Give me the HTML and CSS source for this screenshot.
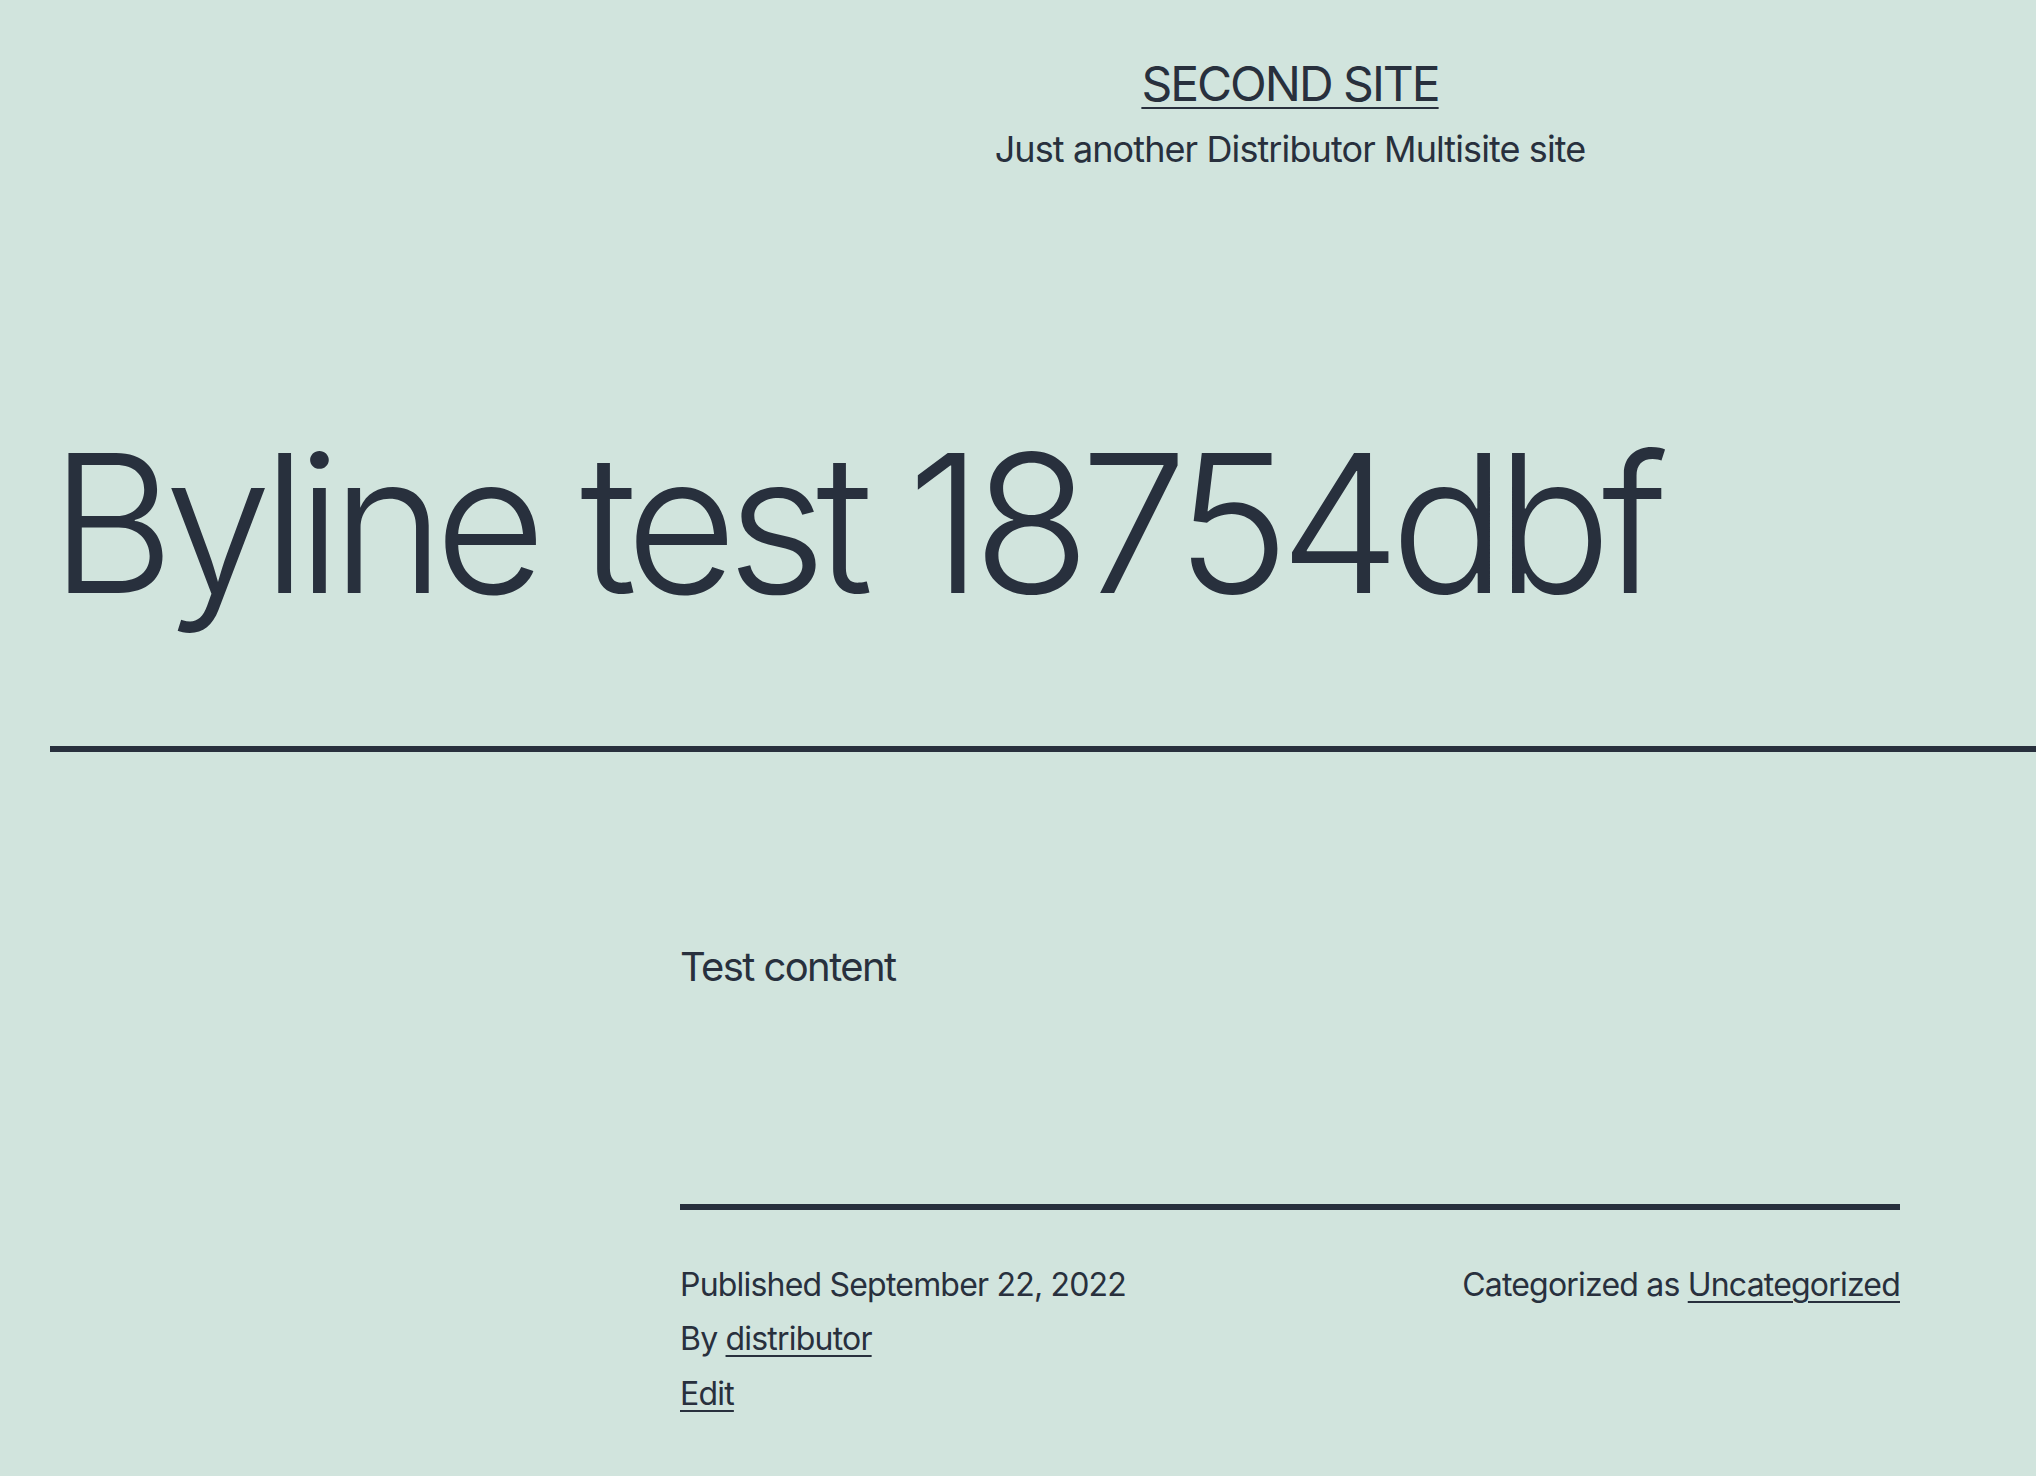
FILE: index.html
```html
<!DOCTYPE html>
<html lang="en">
<head>
<meta charset="utf-8">
<title>Byline test 18754dbf – SECOND SITE</title>
<link rel="stylesheet" href="styles.css">
</head>
<body>
<div class="page">
  <header class="site-header">
    <p class="site-title"><a href="#">SECOND SITE</a></p>
    <p class="site-description">Just another Distributor Multisite site</p>
  </header>
  <main class="site-main">
    <article class="post">
      <header class="entry-header">
        <h1 class="entry-title">Byline test 18754dbf</h1>
      </header>
      <div class="entry-content">
        <p>Test content</p>
      </div>
      <footer class="entry-footer">
        <div class="posted-by">
          <span class="posted-on">Published <time>September 22, 2022</time></span>
          <span class="byline">By <a href="#">distributor</a></span>
          <span class="edit-link"><a href="#">Edit</a></span>
        </div>
        <div class="cat-links">Categorized as <a href="#">Uncategorized</a></div>
      </footer>
    </article>
  </main>
</div>
</body>
</html>
```

FILE: styles.css
```css
html, body {
  margin: 0;
  padding: 0;
  overflow-x: hidden;
}

body {
  background: #d1e4dd;
  color: #28303d;
  font-family: Inter, "Liberation Sans", sans-serif;
}

a {
  color: #28303d;
  text-decoration: underline;
  text-decoration-thickness: 2px;
}

.page {
  width: 2580px;
}

.site-header {
  text-align: center;
  padding-top: 54px;
}

.site-title {
  margin: 0;
  font-size: 48px;
  line-height: 60px;
  font-weight: 400;
  letter-spacing: -2px;
  text-transform: uppercase;
}

.site-title a {
  text-underline-offset: 6px;
}

.site-description {
  margin: 10px 0 0;
  font-size: 36px;
  line-height: 50px;
  letter-spacing: -0.9px;
}

.entry-header {
  margin: 234px 50px 0;
  padding-bottom: 108px;
  border-bottom: 6px solid #28303d;
}

.entry-title {
  margin: 0;
  font-size: 192px;
  line-height: 230px;
  font-weight: 300;
  letter-spacing: -10px;
}

.entry-content {
  width: 1220px;
  margin: 181px auto 0;
}

.entry-content p {
  margin: 0;
  font-size: 40px;
  line-height: 68px;
  letter-spacing: -1.6px;
}

.entry-footer {
  width: 1220px;
  margin: 203px auto 0;
  padding-top: 48px;
  border-top: 6px solid #28303d;
  display: flex;
  justify-content: space-between;
  align-items: flex-start;
  font-size: 32px;
  line-height: 54.4px;
  letter-spacing: -0.8px;
}

.posted-by {
  display: flex;
  flex-direction: column;
}

.entry-footer a {
  text-underline-offset: 5px;
}
```
